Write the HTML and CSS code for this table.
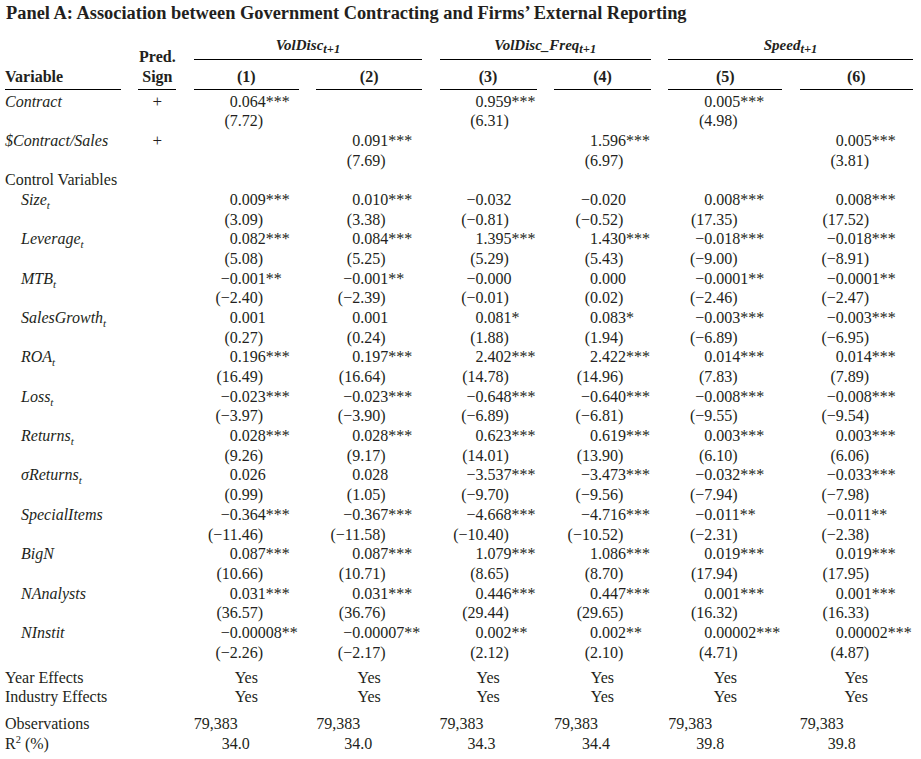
FILE: index.html
```html
<!DOCTYPE html>
<html lang="en">
<head>
<meta charset="utf-8">
<title>Panel A</title>
<link rel="stylesheet" href="styles.css">
</head>
<body>
<h1 class="title">Panel A: Association between Government Contracting and Firms’ External Reporting</h1>

<div class="grid head">
  <div class="hv">Variable</div>
  <div class="hs"><div>Pred.</div><div>Sign</div></div>
  <div class="grp g1">VolDisc<sub class="s">t+1</sub></div>
  <div class="grp g2">VolDisc_Freq<sub class="s">t+1</sub></div>
  <div class="grp g3">Speed<sub class="s">t+1</sub></div>
  <div class="cn c1">(1)</div>
  <div class="cn c2">(2)</div>
  <div class="cn c3">(3)</div>
  <div class="cn c4">(4)</div>
  <div class="cn c5">(5)</div>
  <div class="cn c6">(6)</div>
</div>

<div class="grid body">
  <div class="lab it">Contract</div>
  <div class="sg">+</div>
  <div class="n"><span>0</span>.064***<br><span>(7</span>.72)</div>
  <div></div>
  <div class="n"><span>0</span>.959***<br><span>(6</span>.31)</div>
  <div></div>
  <div class="n"><span>0</span>.005***<br><span>(4</span>.98)</div>
  <div></div>

  <div class="lab it">$Contract/Sales</div>
  <div class="sg">+</div>
  <div></div>
  <div class="n"><span>0</span>.091***<br><span>(7</span>.69)</div>
  <div></div>
  <div class="n"><span>1</span>.596***<br><span>(6</span>.97)</div>
  <div></div>
  <div class="n"><span>0</span>.005***<br><span>(3</span>.81)</div>

  <div class="lab full">Control Variables</div>

  <div class="lab it ind">Size<sub class="s">t</sub></div>
  <div></div>
  <div class="n"><span>0</span>.009***<br><span>(3</span>.09)</div>
  <div class="n"><span>0</span>.010***<br><span>(3</span>.38)</div>
  <div class="n"><span>−0</span>.032<br><span>(−0</span>.81)</div>
  <div class="n"><span>−0</span>.020<br><span>(−0</span>.52)</div>
  <div class="n"><span>0</span>.008***<br><span>(17</span>.35)</div>
  <div class="n"><span>0</span>.008***<br><span>(17</span>.52)</div>

  <div class="lab it ind">Leverage<sub class="s">t</sub></div>
  <div></div>
  <div class="n"><span>0</span>.082***<br><span>(5</span>.08)</div>
  <div class="n"><span>0</span>.084***<br><span>(5</span>.25)</div>
  <div class="n"><span>1</span>.395***<br><span>(5</span>.29)</div>
  <div class="n"><span>1</span>.430***<br><span>(5</span>.43)</div>
  <div class="n"><span>−0</span>.018***<br><span>(−9</span>.00)</div>
  <div class="n"><span>−0</span>.018***<br><span>(−8</span>.91)</div>

  <div class="lab it ind">MTB<sub class="s">t</sub></div>
  <div></div>
  <div class="n"><span>−0</span>.001**<br><span>(−2</span>.40)</div>
  <div class="n"><span>−0</span>.001**<br><span>(−2</span>.39)</div>
  <div class="n"><span>−0</span>.000<br><span>(−0</span>.01)</div>
  <div class="n"><span>0</span>.000<br><span>(0</span>.02)</div>
  <div class="n"><span>−0</span>.0001**<br><span>(−2</span>.46)</div>
  <div class="n"><span>−0</span>.0001**<br><span>(−2</span>.47)</div>

  <div class="lab it ind">SalesGrowth<sub class="s">t</sub></div>
  <div></div>
  <div class="n"><span>0</span>.001<br><span>(0</span>.27)</div>
  <div class="n"><span>0</span>.001<br><span>(0</span>.24)</div>
  <div class="n"><span>0</span>.081*<br><span>(1</span>.88)</div>
  <div class="n"><span>0</span>.083*<br><span>(1</span>.94)</div>
  <div class="n"><span>−0</span>.003***<br><span>(−6</span>.89)</div>
  <div class="n"><span>−0</span>.003***<br><span>(−6</span>.95)</div>

  <div class="lab it ind">ROA<sub class="s">t</sub></div>
  <div></div>
  <div class="n"><span>0</span>.196***<br><span>(16</span>.49)</div>
  <div class="n"><span>0</span>.197***<br><span>(16</span>.64)</div>
  <div class="n"><span>2</span>.402***<br><span>(14</span>.78)</div>
  <div class="n"><span>2</span>.422***<br><span>(14</span>.96)</div>
  <div class="n"><span>0</span>.014***<br><span>(7</span>.83)</div>
  <div class="n"><span>0</span>.014***<br><span>(7</span>.89)</div>

  <div class="lab it ind">Loss<sub class="s">t</sub></div>
  <div></div>
  <div class="n"><span>−0</span>.023***<br><span>(−3</span>.97)</div>
  <div class="n"><span>−0</span>.023***<br><span>(−3</span>.90)</div>
  <div class="n"><span>−0</span>.648***<br><span>(−6</span>.89)</div>
  <div class="n"><span>−0</span>.640***<br><span>(−6</span>.81)</div>
  <div class="n"><span>−0</span>.008***<br><span>(−9</span>.55)</div>
  <div class="n"><span>−0</span>.008***<br><span>(−9</span>.54)</div>

  <div class="lab it ind">Returns<sub class="s">t</sub></div>
  <div></div>
  <div class="n"><span>0</span>.028***<br><span>(9</span>.26)</div>
  <div class="n"><span>0</span>.028***<br><span>(9</span>.17)</div>
  <div class="n"><span>0</span>.623***<br><span>(14</span>.01)</div>
  <div class="n"><span>0</span>.619***<br><span>(13</span>.90)</div>
  <div class="n"><span>0</span>.003***<br><span>(6</span>.10)</div>
  <div class="n"><span>0</span>.003***<br><span>(6</span>.06)</div>

  <div class="lab it ind">σReturns<sub class="s">t</sub></div>
  <div></div>
  <div class="n"><span>0</span>.026<br><span>(0</span>.99)</div>
  <div class="n"><span>0</span>.028<br><span>(1</span>.05)</div>
  <div class="n"><span>−3</span>.537***<br><span>(−9</span>.70)</div>
  <div class="n"><span>−3</span>.473***<br><span>(−9</span>.56)</div>
  <div class="n"><span>−0</span>.032***<br><span>(−7</span>.94)</div>
  <div class="n"><span>−0</span>.033***<br><span>(−7</span>.98)</div>

  <div class="lab it ind">SpecialItems</div>
  <div></div>
  <div class="n"><span>−0</span>.364***<br><span>(−11</span>.46)</div>
  <div class="n"><span>−0</span>.367***<br><span>(−11</span>.58)</div>
  <div class="n"><span>−4</span>.668***<br><span>(−10</span>.40)</div>
  <div class="n"><span>−4</span>.716***<br><span>(−10</span>.52)</div>
  <div class="n"><span>−0</span>.011**<br><span>(−2</span>.31)</div>
  <div class="n"><span>−0</span>.011**<br><span>(−2</span>.38)</div>

  <div class="lab it ind">BigN</div>
  <div></div>
  <div class="n"><span>0</span>.087***<br><span>(10</span>.66)</div>
  <div class="n"><span>0</span>.087***<br><span>(10</span>.71)</div>
  <div class="n"><span>1</span>.079***<br><span>(8</span>.65)</div>
  <div class="n"><span>1</span>.086***<br><span>(8</span>.70)</div>
  <div class="n"><span>0</span>.019***<br><span>(17</span>.94)</div>
  <div class="n"><span>0</span>.019***<br><span>(17</span>.95)</div>

  <div class="lab it ind">NAnalysts</div>
  <div></div>
  <div class="n"><span>0</span>.031***<br><span>(36</span>.57)</div>
  <div class="n"><span>0</span>.031***<br><span>(36</span>.76)</div>
  <div class="n"><span>0</span>.446***<br><span>(29</span>.44)</div>
  <div class="n"><span>0</span>.447***<br><span>(29</span>.65)</div>
  <div class="n"><span>0</span>.001***<br><span>(16</span>.32)</div>
  <div class="n"><span>0</span>.001***<br><span>(16</span>.33)</div>

  <div class="lab it ind">NInstit</div>
  <div></div>
  <div class="n"><span>−0</span>.00008**<br><span>(−2</span>.26)</div>
  <div class="n"><span>−0</span>.00007**<br><span>(−2</span>.17)</div>
  <div class="n"><span>0</span>.002**<br><span>(2</span>.12)</div>
  <div class="n"><span>0</span>.002**<br><span>(2</span>.10)</div>
  <div class="n"><span>0</span>.00002***<br><span>(4</span>.71)</div>
  <div class="n"><span>0</span>.00002***<br><span>(4</span>.87)</div>

  <div class="spacer sp1"></div>

  <div class="lab">Year Effects</div>
  <div></div>
  <div class="y">Yes</div>
  <div class="y">Yes</div>
  <div class="y">Yes</div>
  <div class="y">Yes</div>
  <div class="y">Yes</div>
  <div class="y">Yes</div>

  <div class="lab">Industry Effects</div>
  <div></div>
  <div class="y">Yes</div>
  <div class="y">Yes</div>
  <div class="y">Yes</div>
  <div class="y">Yes</div>
  <div class="y">Yes</div>
  <div class="y">Yes</div>

  <div class="spacer sp2"></div>

  <div class="lab">Observations</div>
  <div></div>
  <div>79,383</div>
  <div>79,383</div>
  <div>79,383</div>
  <div>79,383</div>
  <div>79,383</div>
  <div>79,383</div>

  <div class="lab">R<sup class="p">2</sup> (%)</div>
  <div></div>
  <div class="n"><span>34</span>.0</div>
  <div class="n"><span>34</span>.0</div>
  <div class="n"><span>34</span>.3</div>
  <div class="n"><span>34</span>.4</div>
  <div class="n"><span>39</span>.8</div>
  <div class="n"><span>39</span>.8</div>
</div>
</body>
</html>
```

FILE: styles.css
```css
* { box-sizing: border-box; }

body {
  margin: 0;
  padding: 0 8px 0 5px;
  font-family: "Liberation Serif", "Times New Roman", serif;
  font-size: 16px;
  color: #231f20;
  background: #fff;
}

.title {
  margin: 0;
  padding: 2.8px 0 0 1px;
  font-size: 18.4px;
  line-height: 20px;
  font-weight: bold;
  white-space: nowrap;
}

.grid {
  display: grid;
  grid-template-columns: 116px 38px 105px 106px 97px 97px 114px 113px;
  column-gap: 17.4px;
  line-height: 19.67px;
}

.head {
  margin-top: 12.9px;
  font-weight: bold;
}

.hv {
  grid-row: 1 / 3;
  grid-column: 1;
  display: flex;
  align-items: flex-end;
  padding-bottom: 2.4px;
  border-bottom: 1px solid #000;
}

.hs {
  grid-row: 1 / 3;
  grid-column: 2;
  display: flex;
  flex-direction: column;
  justify-content: flex-end;
  text-align: center;
  padding-bottom: 2.4px;
  border-bottom: 1px solid #000;
}

.grp {
  grid-row: 1;
  text-align: center;
  font-style: italic;
  font-size: 15px;
  padding-bottom: 3.3px;
  border-bottom: 1px solid #000;
}
.grp sub.s {
  font-size: 12.5px;
  vertical-align: -3px;
}
.g1 { grid-column: 3 / 5; }
.g2 { grid-column: 5 / 7; }
.g3 { grid-column: 7 / 9; }

.cn {
  grid-row: 2;
  text-align: center;
  padding-top: 7px;
  padding-bottom: 2.4px;
  border-bottom: 1px solid #000;
}
.c1 { grid-column: 3; }
.c2 { grid-column: 4; }
.c3 { grid-column: 5; }
.c4 { grid-column: 6; }
.c5 { grid-column: 7; }
.c6 { grid-column: 8; }

.body { padding-top: 2px; }

.lab { white-space: nowrap; }
.it { font-style: italic; }
.ind { padding-left: 16px; }
.full { grid-column: 1 / -1; }
.sg { text-align: center; font-size: 17px; }

.n { white-space: nowrap; }
.n span {
  display: inline-block;
  width: 44px;
  text-align: right;
}

.y { text-align: center; }

.spacer { grid-column: 1 / -1; }
.sp1 { height: 5.6px; }
.sp2 { height: 6.7px; }

sub.s {
  font-size: 11px;
  vertical-align: -3.5px;
  line-height: 0;
}

sup.p {
  font-size: 10.5px;
  vertical-align: 6px;
  line-height: 0;
}
```
